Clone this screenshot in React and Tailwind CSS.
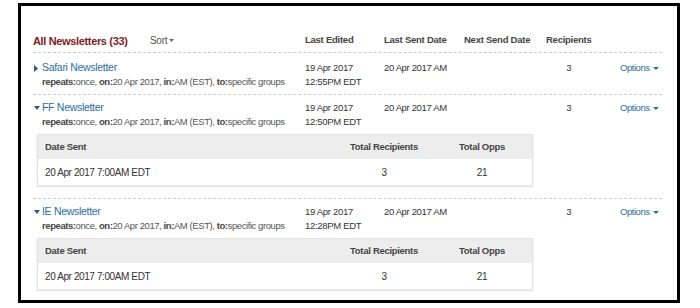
import React from "react";

function RightTri() {
  return (
    <svg width="4" height="7" viewBox="0 0 4 7" className="block">
      <path d="M0 0 L4 3.5 L0 7 Z" fill="#2d5677" />
    </svg>
  );
}

function DownTri({ color = "#2d5677", w = 6, h = 4 }) {
  return (
    <svg width={w} height={h} viewBox={`0 0 ${w} ${h}`} className="block">
      <path d={`M0 0 L${w} 0 L${w / 2} ${h} Z`} fill={color} />
    </svg>
  );
}

function SubTable() {
  return (
    <div className="mt-[6px] ml-[4px] w-[496px] border border-[#e3e3e3] shadow-[0_1px_2px_rgba(0,0,0,0.12)]">
      <div className="grid grid-cols-[302px_88px_10px_88px_6px] h-[24px] items-center bg-[#ededed] font-bold text-[#444] text-[9.5px] tracking-[-0.3px]">
        <div className="pl-[7px]">Date Sent</div>
        <div className="text-center whitespace-nowrap">Total Recipients</div>
        <div />
        <div className="text-center whitespace-nowrap">Total Opps</div>
        <div />
      </div>
      <div className="grid grid-cols-[302px_88px_10px_88px_6px] h-[26px] items-center bg-white text-[#333] text-[10px] tracking-[-0.4px]">
        <div className="pl-[7px] whitespace-nowrap">20 Apr 2017 7:00AM EDT</div>
        <div className="text-center">3</div>
        <div />
        <div className="text-center">21</div>
        <div />
      </div>
    </div>
  );
}

function Row({ name, expanded, time, first, last }) {
  const cls = first
    ? "pt-[8px] pb-[6px] border-b border-dashed border-[#cccccc]"
    : last
    ? "pt-[6px] pb-[8px]"
    : "pt-[6px] pb-[12px] border-b border-dashed border-[#cccccc]";
  return (
    <div className={cls}>
      <div className="grid grid-cols-[272px_79px_80px_82px_74px_43px]">
        <div>
          <div className="flex items-center h-[14px] text-[10.5px] tracking-[-0.3px] text-[#2b6ea3] whitespace-nowrap">
            <span className="w-[9px] shrink-0 flex items-center pl-[1px]">
              {expanded ? <DownTri /> : <RightTri />}
            </span>
            {name}
          </div>
          <div className="h-[13px] leading-[13px] pl-[9px] text-[9.5px] tracking-[-0.42px] text-[#555] whitespace-nowrap">
            <b className="text-[#444]">repeats:</b>once, <b className="text-[#444]">on:</b>20 Apr 2017,{" "}
            <b className="text-[#444]">in:</b>AM (EST), <b className="text-[#444]">to:</b>specific groups
          </div>
        </div>
        <div className="text-[9.5px] tracking-[-0.3px] text-[#333]">
          <div className="h-[14px] leading-[14px] whitespace-nowrap">19 Apr 2017</div>
          <div className="h-[13px] leading-[13px] whitespace-nowrap">{time}</div>
        </div>
        <div className="text-[9.5px] tracking-[-0.35px] text-[#333] h-[14px] leading-[14px] whitespace-nowrap">
          20 Apr 2017 AM
        </div>
        <div />
        <div className="w-[46px] text-center text-[9.5px] text-[#333] h-[14px] leading-[14px]">3</div>
        <div className="flex items-center gap-[3px] h-[14px] text-[9.5px] tracking-[-0.45px] text-[#2b6ea3] whitespace-nowrap">
          Options
          <DownTri color="#2b6ea3" w={6} h={3} />
        </div>
      </div>
      {expanded && <SubTable />}
    </div>
  );
}

export default function App() {
  return (
    <div className="w-[700px] h-[308px] bg-white pt-[3px] pl-[18px] font-['Liberation_Sans',Arial,sans-serif]">
      <div className="w-[662px] h-[300px] border-[3px] border-black bg-white overflow-hidden">
        <div className="h-full mr-[3px] border-r border-[#ececec] pl-[12px] pr-[11px] pt-[27px]">
          <div className="grid grid-cols-[272px_79px_80px_82px_74px_43px] pb-[5px] border-b border-dashed border-[#cccccc] h-[20px] items-center">
            <div className="flex items-center">
              <div className="w-[117px] text-[11px] tracking-[-0.35px] font-bold text-[#7f1d1d] whitespace-nowrap leading-[14px]">
                All Newsletters (33)
              </div>
              <div className="flex items-center gap-[2px] text-[10px] tracking-[-0.3px] text-[#555]">
                Sort
                <DownTri color="#666" w={5} h={3} />
              </div>
            </div>
            <div className="text-[9.5px] tracking-[-0.25px] font-bold text-[#444] whitespace-nowrap">Last Edited</div>
            <div className="text-[9.5px] tracking-[-0.25px] font-bold text-[#444] whitespace-nowrap">Last Sent Date</div>
            <div className="text-[9.5px] tracking-[-0.25px] font-bold text-[#444] whitespace-nowrap">Next Send Date</div>
            <div className="text-[9.5px] tracking-[-0.25px] font-bold text-[#444] whitespace-nowrap">Recipients</div>
            <div />
          </div>
          <Row name="Safari Newsletter" time="12:55PM EDT" first />
          <Row name="FF Newsletter" time="12:50PM EDT" expanded />
          <Row name="IE Newsletter" time="12:28PM EDT" expanded last />
        </div>
      </div>
    </div>
  );
}
